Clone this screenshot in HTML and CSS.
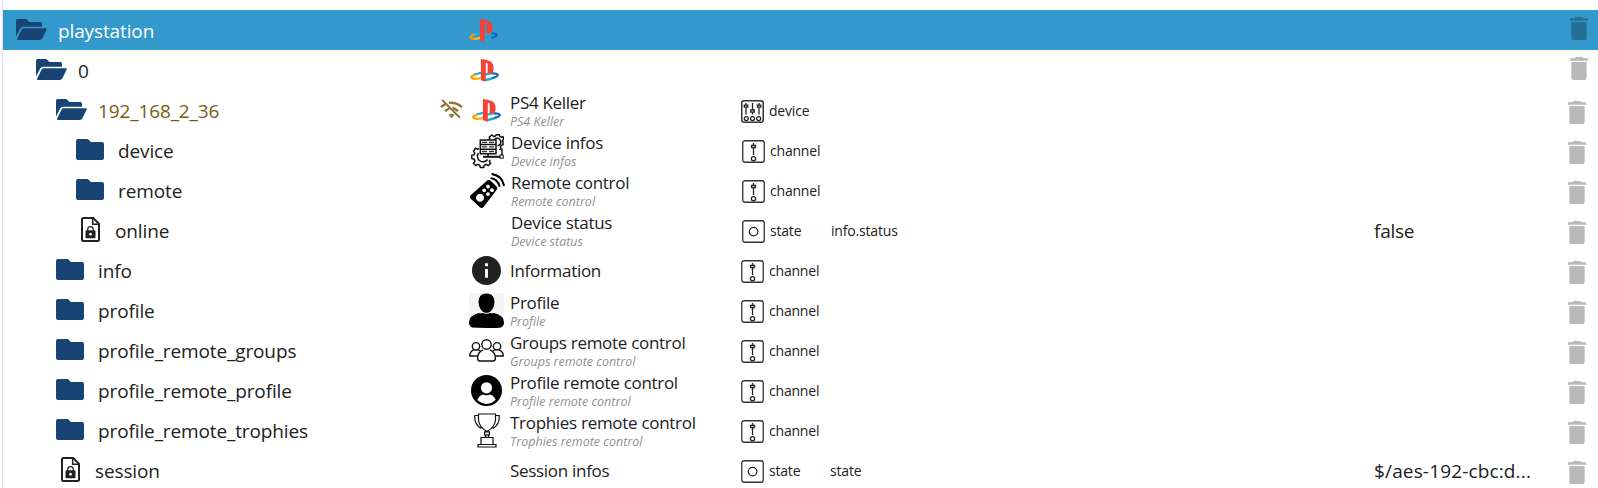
FILE: index.html
```
<!DOCTYPE html>
<html lang="en">
<head>
<meta charset="utf-8">
<title>Objects</title>
<link rel="stylesheet" href="styles.css">
</head>
<body>
<svg class="defs" aria-hidden="true">
  <defs>
    <pattern id="checks" width="3" height="3" patternUnits="userSpaceOnUse"><rect width="3" height="3" fill="#fafafa"/><path d="M0 0h1.5v1.5H0zM1.5 1.5H3V3H1.5z" fill="#efefef"/></pattern>
  </defs>
  <symbol id="open" viewBox="0 0 31 21"><path d="M1.6 0H9.6Q10.6 0 11.3.8L13.3 2.9H24.4Q26 2.9 26 4.5V7.7H7.2Q5.2 7.7 4.4 9.2L0 17.6V1.6Q0 0 1.6 0z"/><path d="M7.7 9.2H30.2Q31.4 9.2 30.8 10.3L26.4 19.3Q25.5 21 23.8 21H2Q.4 21 1.2 19.5L5.6 10.6Q6.3 9.2 7.7 9.2z"/></symbol>
  <symbol id="folder" viewBox="0 0 28 21"><path d="M2 0H11Q12 0 12.7.7L14.9 3H26Q28 3 28 5V19Q28 21 26 21H2Q0 21 0 19V2Q0 0 2 0z"/></symbol>
  <symbol id="file" viewBox="0 0 19 25"><path d="M2.5 1H12.2L18 6.8V22.5Q18 24 16.5 24H2.5Q1 24 1 22.5V2.5Q1 1 2.5 1z" fill="none" stroke="#212121" stroke-width="2"/><path d="M11.7 1.5V7.2H17.5" fill="none" stroke="#212121" stroke-width="1.5"/><path d="M6.7 14V12.5a2.8 2.8 0 0 1 5.6 0V14" fill="none" stroke="#212121" stroke-width="1.2"/><path fill-rule="evenodd" d="M5.5 13.2h8q1 0 1 1v6q0 1-1 1h-8q-1 0-1-1v-6q0-1 1-1zM9.5 15.8a1.4 1.4 0 1 0 .01 0z" fill="#212121"/></symbol>
  <symbol id="ps" viewBox="0 0 29 23"><g fill="none" stroke-width="2.3"><path d="M4.5 15.6Q7 14.6 11 13.8" stroke="#12b5dc"/><path d="M5.6 15.2Q1.2 16.9 1.2 18.1Q1.8 19.9 6.5 19.8" stroke="#ff9800"/><path d="M5.5 19.8Q8.5 19.8 11.5 18.6" stroke="#fdb813"/><path d="M15 15.6Q19 14.3 23.5 14.3" stroke="#12b5dc"/><path d="M22.5 14.3Q27.8 14.4 27.8 16Q27.4 17.6 21.5 19.4" stroke="#1565c0"/><path d="M22.5 19.1Q19 20.3 15 21.2" stroke="#12b0da"/></g><path fill="#f44336" d="M10.9 0Q16.5.6 20 2.2Q23.6 3.9 23.6 9.5Q23.6 16.5 17.6 14.2V5.2Q17.6 3.8 16.7 3.8Q15.8 3.8 15.8 5.2V22.8L10.9 21.3z"/></symbol>
  <symbol id="trash" viewBox="5 3 14 18"><path d="M19,4H15.5L14.5,3H9.5L8.5,4H5V6H19M6,19A2,2 0 0,0 8,21H16A2,2 0 0,0 18,19V7H6V19Z"/></symbol>
  <symbol id="wifi" viewBox="0 0 23 20"><g fill="none" stroke="#92773a" stroke-width="2.5"><path d="M9 3.8Q16.5 3 22 8.2M1 8.2Q3 6.3 5.4 5.1M12.5 9Q15.5 9.8 18 12.2M5 12.2Q6.8 10.4 9.3 9.6"/><path d="M2.2 1L20 18.8" stroke-width="2"/></g><path d="M8.5 15.8Q11.5 13.8 14.5 15.8L11.5 19.2z" fill="#92773a"/></symbol>
  <symbol id="server" viewBox="0 0 33 35"><g fill="none" stroke="#111" stroke-width="1.5"><path d="M8 14.5l-1.5.7-2-.9-2 2.7 1.3 2-.7 1.7-2.3.6v3.2l2.3.7.8 2-1.4 2 2.3 2.4 2-1.3 2 1 .5 2.2h3.3l.7-2.2 2-.9 2 1.2 2.3-2.3-1.2-2 .6-1.6M7.5 19a5.4 5.4 0 0 0 9 6.5"/><path d="M17.5 5.5l1.3-1-.4-1.5L21 1l1.8 1.5 1.7-.4L25.3.7h3l.6 1.9 1.8.7 1.3-.6.6 2.4-1.2 1.6.6 1.4v2.7l-1.8.6-.8 1.7.6 1.7-1.8 1.2M23.5 5.2a3.8 3.8 0 1 1 3 6.6"/><path d="M9.3 6H25v4.6H9.3zM9.3 10.6H25v4.6H9.3zM9.3 15.2H25v4.6H9.3zM17 19.8v2.4M31 14.5V21"/><path d="M12 22.8h17" stroke-width="2"/></g><g stroke="#333" stroke-width="1.3"><path d="M11 8.3h5M18 8.3h5M11 12.9h5M18 12.9h5M11 17.5h5M18 17.5h5"/></g><rect x="29" y="21" width="3.2" height="3.2" fill="#fff" stroke="#111"/></symbol>
  <symbol id="remote" viewBox="0 0 35 35"><path fill-rule="evenodd" d="M17.2 7.6q1.8-1.4 3.5.1l5.8 5.8q1.5 1.8 0 3.5L13.6 34q-2 2-4 0L1 26q-2-2-.1-4zM10 20.8a4 4 0 1 0 .01 0zM18 11.7a1.9 1.9 0 1 0 .01 0zM22 15.3a1.9 1.9 0 1 0 .01 0zM14.2 15.5a1.9 1.9 0 1 0 .01 0zM18 19.2a1.9 1.9 0 1 0 .01 0z"/><path d="M21.5 5.2Q27.5 6.3 29.4 13M22.5 1.1Q31.8 2.8 33.9 12.2" fill="none" stroke="#000" stroke-width="2.1" stroke-linecap="round"/></symbol>
  <symbol id="info" viewBox="2 2 20 20"><path fill="#212121" d="M12 2C6.48 2 2 6.48 2 12s4.48 10 10 10 10-4.48 10-10S17.52 2 12 2zm1 15h-2v-6h2v6zm0-8h-2V7h2v2z"/></symbol>
  <symbol id="person" viewBox="0 0 35 35"><path fill="url(#checks)" d="M0 0h35v35H0z"/><path d="M17.5 18.7Q20.3 21 25 20Q35 22.5 35 29.5Q35 33 32 34.4Q25 35.2 17.5 35T3 34.4Q0 33 0 29.5Q0 22.5 10 20Q14.7 21 17.5 18.7z"/><path d="M17.5 0C23 0 26 4 26 9S22.7 20.4 17.5 20.4 9 14 9 9 12 0 17.5 0z" stroke="#fff" stroke-width="1"/></symbol>
  <symbol id="group" viewBox="0 0 35 24"><g fill="none" stroke="#111" stroke-width="1.4"><circle cx="17.5" cy="5.5" r="4.7"/><circle cx="7" cy="7.3" r="3.7"/><circle cx="28" cy="7.3" r="3.7"/><path d="M14.2 10.8Q8.6 12.8 8.6 19.5Q8.6 21.8 11 22H24Q26.4 21.8 26.4 19.5Q26.4 12.8 20.8 10.8M8.7 17H.8Q.7 12.7 5 10.7M9 10.8L11.3 12M26.3 17h7.9Q34.3 12.7 30 10.7M26 10.8L23.7 12"/></g></symbol>
  <symbol id="account" viewBox="0 0 31 31"><circle cx="15.5" cy="15.5" r="15.5"/><circle cx="15.5" cy="12.8" r="5.6" fill="#fff"/><path d="M6.3 24.8Q8.5 19.9 12.5 19.5Q15.5 21.2 18.5 19.5Q22.5 19.9 24.7 24.8Q21 28.9 15.5 28.9T6.3 24.8z" fill="#fff"/></symbol>
  <symbol id="trophy" viewBox="0 0 26 35"><g fill="none" stroke="#111" stroke-width="1.2"><path d="M4.5 1H21.5V7Q21 14 13 18.5Q5 14 4.5 7zM4.5 2.5H.8Q0 11 7.2 15.6M21.5 2.5h3.7Q26 11 18.8 15.6M10.6 18.8h4.8v3h-4.8zM11.5 21.8v2.5h3v-2.5M7 24.5h12v7H7zM4 31.5h18V34H4z"/></g></symbol>
  <symbol id="device" viewBox="0 0 23 23"><rect x=".75" y=".75" width="21.5" height="21.5" rx="2.3" fill="none" stroke="#333" stroke-width="1.5"/><g fill="none" stroke="#222" stroke-width="1.3"><path d="M5 3v11.5M11.5 3v11.5M18 3v11.5"/><path d="M3.3 5.2h3.5v2H3.3zM9.8 10h3.5v2.2H9.8zM16.3 5.2h3.5v2h-3.5z" fill="#fff"/><circle cx="5.3" cy="18.6" r="2"/><circle cx="11.5" cy="18.6" r="2"/><circle cx="17.7" cy="18.6" r="2"/></g></symbol>
  <symbol id="channel" viewBox="0 0 23 23"><rect x=".75" y=".75" width="21.5" height="21.5" rx="2.3" fill="none" stroke="#333" stroke-width="1.3"/><g fill="none" stroke="#222" stroke-width="1.3"><path d="M11.5 3v12"/><path d="M9.6 5.3h3.9v2.2H9.6z" fill="#fff"/><circle cx="11.5" cy="18.7" r="2.1"/></g></symbol>
  <symbol id="state" viewBox="0 0 23 23"><rect x=".75" y=".75" width="21.5" height="21.5" rx="2.3" fill="none" stroke="#333" stroke-width="1.3"/><circle cx="11.6" cy="11.6" r="4.3" fill="none" stroke="#222" stroke-width="1.2"/></symbol>
</svg>
<main class="tree">
  <div class="row selected top r0"><div class="id l0"><svg class="open"><use href="#open"/></svg><span>playstation</span></div><div class="status"></div><div class="icon"><svg class="ps"><use href="#ps"/></svg></div><div class="name"></div><div class="type"></div><div class="role"></div><div class="value"></div><div class="action"><svg><use href="#trash"/></svg></div></div>
  <div class="row top r1"><div class="id l1"><svg class="open"><use href="#open"/></svg><span>0</span></div><div class="status"></div><div class="icon"><svg class="ps"><use href="#ps"/></svg></div><div class="name"></div><div class="type"></div><div class="role"></div><div class="value"></div><div class="action"><svg><use href="#trash"/></svg></div></div>
  <div class="row"><div class="id l2"><svg class="open"><use href="#open"/></svg><span class="offline">192_168_2_36</span></div><div class="status"><svg class="wifi"><use href="#wifi"/></svg></div><div class="icon"><svg class="ps"><use href="#ps"/></svg></div><div class="name"><b>PS4 Keller</b><i>PS4 Keller</i></div><div class="type"><svg><use href="#device"/></svg>device</div><div class="role"></div><div class="value"></div><div class="action"><svg><use href="#trash"/></svg></div></div>
  <div class="row deep"><div class="id l3"><svg class="folder"><use href="#folder"/></svg><span>device</span></div><div class="status"></div><div class="icon"><svg class="server"><use href="#server"/></svg></div><div class="name"><b>Device infos</b><i>Device infos</i></div><div class="type"><svg><use href="#channel"/></svg>channel</div><div class="role"></div><div class="value"></div><div class="action"><svg><use href="#trash"/></svg></div></div>
  <div class="row deep"><div class="id l3"><svg class="folder"><use href="#folder"/></svg><span>remote</span></div><div class="status"></div><div class="icon remote"><svg class="big"><use href="#remote"/></svg></div><div class="name"><b>Remote control</b><i>Remote control</i></div><div class="type"><svg><use href="#channel"/></svg>channel</div><div class="role"></div><div class="value"></div><div class="action"><svg><use href="#trash"/></svg></div></div>
  <div class="row deep"><div class="id l3"><svg class="file"><use href="#file"/></svg><span>online</span></div><div class="status"></div><div class="icon"></div><div class="name"><b>Device status</b><i>Device status</i></div><div class="type"><svg><use href="#state"/></svg>state</div><div class="role">info.status</div><div class="value">false</div><div class="action"><svg><use href="#trash"/></svg></div></div>
  <div class="row"><div class="id l2"><svg class="folder"><use href="#folder"/></svg><span>info</span></div><div class="status"></div><div class="icon"><svg class="info"><use href="#info"/></svg></div><div class="name single"><b>Information</b></div><div class="type"><svg><use href="#channel"/></svg>channel</div><div class="role"></div><div class="value"></div><div class="action"><svg><use href="#trash"/></svg></div></div>
  <div class="row"><div class="id l2"><svg class="folder"><use href="#folder"/></svg><span>profile</span></div><div class="status"></div><div class="icon"><svg class="big"><use href="#person"/></svg></div><div class="name"><b>Profile</b><i>Profile</i></div><div class="type"><svg><use href="#channel"/></svg>channel</div><div class="role"></div><div class="value"></div><div class="action"><svg><use href="#trash"/></svg></div></div>
  <div class="row"><div class="id l2"><svg class="folder"><use href="#folder"/></svg><span>profile_remote_groups</span></div><div class="status"></div><div class="icon"><svg class="group"><use href="#group"/></svg></div><div class="name"><b>Groups remote control</b><i>Groups remote control</i></div><div class="type"><svg><use href="#channel"/></svg>channel</div><div class="role"></div><div class="value"></div><div class="action"><svg><use href="#trash"/></svg></div></div>
  <div class="row"><div class="id l2"><svg class="folder"><use href="#folder"/></svg><span>profile_remote_profile</span></div><div class="status"></div><div class="icon"><svg class="account"><use href="#account"/></svg></div><div class="name"><b>Profile remote control</b><i>Profile remote control</i></div><div class="type"><svg><use href="#channel"/></svg>channel</div><div class="role"></div><div class="value"></div><div class="action"><svg><use href="#trash"/></svg></div></div>
  <div class="row"><div class="id l2"><svg class="folder"><use href="#folder"/></svg><span>profile_remote_trophies</span></div><div class="status"></div><div class="icon"><svg class="trophy"><use href="#trophy"/></svg></div><div class="name"><b>Trophies remote control</b><i>Trophies remote control</i></div><div class="type"><svg><use href="#channel"/></svg>channel</div><div class="role"></div><div class="value"></div><div class="action"><svg><use href="#trash"/></svg></div></div>
  <div class="row"><div class="id l2"><svg class="file"><use href="#file"/></svg><span>session</span></div><div class="status"></div><div class="icon"></div><div class="name single"><b>Session infos</b></div><div class="type"><svg><use href="#state"/></svg>state</div><div class="role">state</div><div class="value encrypted">$/aes-192-cbc:d...</div><div class="action"><svg><use href="#trash"/></svg></div></div>
</main>
</body>
</html>
```
FILE: styles.css
```
* { box-sizing: border-box; }
body { margin: 0; height: 488px; overflow: hidden; background: #fff; color: #212121; font-family: "Open Sans", "Noto Sans", sans-serif; }
svg { display: block; flex: none; }
.defs { width: 0; height: 0; }
.tree { margin-left: 2px; padding-top: 10px; border-left: 1px solid #e0e0e0; height: 488px; overflow: hidden; }
.row { display: grid; grid-template-columns: 427px 36px 41px 231px 88px 544px 190px 1fr; height: 40px; }
.row > div { display: flex; white-space: nowrap; min-width: 0; }
.selected { background: #3399cc; color: #fff; }

.row > .id { font-size: 19px; line-height: 42px; letter-spacing: -0.12px; }
.id svg { fill: #174475; margin-top: 9px; }
.l0 { padding-left: 13px; }
.l1 { padding-left: 33px; }
.l2 { padding-left: 53px; }
.l3 { padding-left: 73px; }
.open { width: 31px; height: 21px; margin-right: 11px; }
.folder { width: 28px; height: 21px; margin-right: 14px; }
.file { width: 19px; height: 25px; margin-left: 5px; margin-right: 15px; }
.id .file { margin-top: 7px; }
.offline { color: #7a5a10; }

.status { padding: 9px 0 0 10px; }
.wifi { width: 23px; height: 20px; }
.row > .icon { justify-content: center; align-items: flex-start; }
.r0 .icon { padding-right: 6px; }
.r1 .icon { padding-right: 4px; }
.deep .icon { padding-left: 2px; }
.deep .remote { padding-left: 1px; }
.ps { width: 29px; height: 23px; margin-top: 9px; }
.server { width: 33px; height: 35px; margin-top: 4px; }
.big { width: 35px; height: 35px; margin-top: 3px; }
.info { width: 29px; height: 29px; margin-top: 6px; }
.group { width: 35px; height: 24px; margin-top: 9px; }
.account { width: 31px; height: 31px; margin-top: 5px; }
.trophy { width: 26px; height: 35px; margin-top: 3px; }

.row > .name { flex-direction: column; padding: 1px 0 0 3px; }
.deep > .name { padding-left: 4px; }
.name b { font-weight: 400; font-size: 17px; line-height: 24px; letter-spacing: -0.3px; }
.name i { font-size: 12.5px; line-height: 14px; letter-spacing: 0; color: #909090; }
.single b { line-height: 40px; }

.row > .type { padding-left: 3px; gap: 5px; font-size: 14px; line-height: 42px; letter-spacing: -0.2px; }
.deep > .type { padding-left: 4px; }
.type svg { width: 23px; height: 23px; margin-top: 10px; }
.row > .role { padding-left: 4px; font-size: 14px; line-height: 42px; letter-spacing: -0.18px; }
.deep > .role { padding-left: 5px; }
.row > .value { padding-left: 4px; font-size: 19px; line-height: 42px; letter-spacing: -0.25px; }
.row > .encrypted { letter-spacing: 0.15px; }
.action { padding: 10.5px 0 0 8px; }
.top .action { padding: 6.5px 0 0 10px; }
.action svg { width: 18px; height: 23px; fill: #000; opacity: .27; }
```
